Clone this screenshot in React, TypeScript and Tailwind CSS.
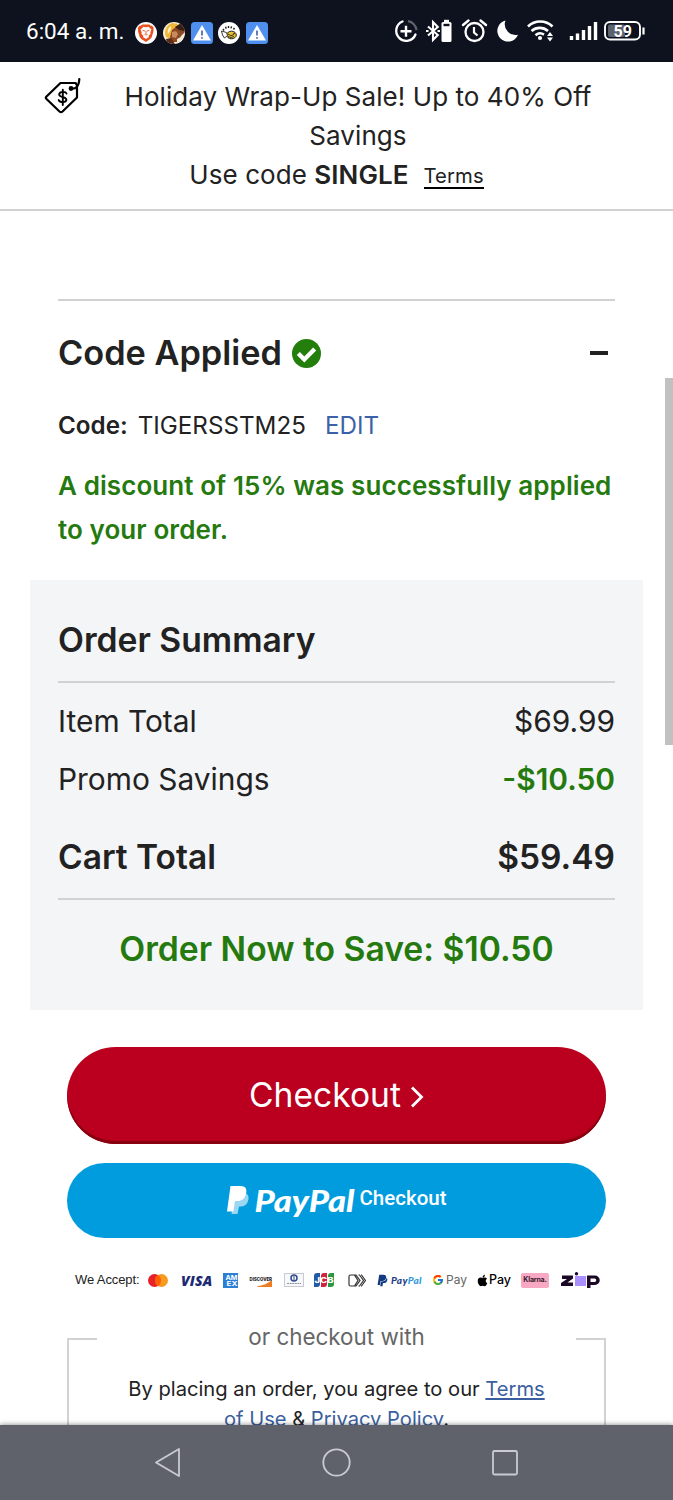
import React from 'react';
import { FcGoogle } from 'react-icons/fc';
import { FaApple, FaPaypal } from 'react-icons/fa';

const summaryRows = [
  { label: 'Item Total', value: '$69.99', saving: false },
  { label: 'Promo Savings', value: '-$10.50', saving: true },
];

function BraveIcon() {
  return (
    <svg width="22" height="22" viewBox="0 0 22 22">
      <circle cx="11" cy="11" r="11" fill="#fff" />
      <path d="M7.5 2.5h7l1.2 1.3 1.5-.1 1.6 2.6-.5 1.4.3 1-1.9 6.5-1.5 1.9L11 20l-4.7-2.9-1.5-1.9L2.9 8.7l.3-1-.5-1.4 1.6-2.6 1.5.1z" fill="#e8501f" />
      <path d="M11 5.3l2.5-.5 2.9 2.7-1.1 2.9.3 1.5-2 1.5.4 1.6L11 17l-3-2 .4-1.600-2-1.500.3-1.500L5.600 7.500l2.900-2.700z" fill="#fff" />
      <path d="M7.6 8.3l2.4.8M14.4 8.3l-2.4.8M11 9v3M9.5 12.3l1.5.8 1.5-.8" stroke="#e8501f" strokeWidth="0.9" fill="none" />
    </svg>
  );
}

function FaceIcon() {
  return (
    <svg width="22" height="22" viewBox="0 0 22 22">
      <defs>
        <clipPath id="face">
          <circle cx="11" cy="11" r="11" />
        </clipPath>
      </defs>
      <g clipPath="url(#face)">
        <rect width="22" height="22" fill="#f8ecd6" />
        <path d="M9 1C2 4 1 10 3 15l5 2 2-7 5-8z" fill="#efb73a" />
        <path d="M8 4C5 6 4 9 5 12l3-5z" fill="#fff3d0" />
        <path d="M9 8l5-4 6 1 2 5-4 4-2 6H9l-2-5z" fill="#8b4a26" />
        <path d="M12 5l6-4 4 3v5l-6-1z" fill="#3a1d12" />
        <path d="M9 10l4-1 2 3-2 4-4-1z" fill="#c98a5c" />
        <path d="M3 17l5-1 4 6H4z" fill="#5c2c17" />
        <path d="M14 17l6-3v6h-6z" fill="#f5e9d8" />
      </g>
    </svg>
  );
}

function AlertIcon() {
  return (
    <svg width="22" height="22" viewBox="0 0 22 22">
      <rect width="22" height="22" rx="3.5" fill="#4f8fee" />
      <path d="M11 3l9 15.5H2z" fill="#fff" />
      <path d="M11 8.5v5" stroke="#3b5f98" strokeWidth="1.6" />
      <circle cx="11" cy="15.9" r="0.9" fill="#3b5f98" />
    </svg>
  );
}

function BeeIcon() {
  return (
    <svg width="22" height="22" viewBox="0 0 22 22">
      <circle cx="11" cy="11" r="11" fill="#fff" />
      <path d="M5 7l1 1.5M7.5 4.8l.8 1.800M10.500 4v2M13.500 4.300l-.5 2M16.500 6l-1 1.500" stroke="#222" strokeWidth="1.4" />
      <ellipse cx="13.5" cy="13" rx="4.8" ry="3.8" fill="#e9c331" stroke="#222" strokeWidth="1" />
      <path d="M10 12q3 3 6 .5M10 14.500q3 2 6 0" fill="none" stroke="#222" strokeWidth="0.9" />
      <path d="M3.5 9l5 1.500 1 3-3 2.500-2-3z" fill="#fff" stroke="#222" strokeWidth="0.9" />
      <circle cx="16" cy="11.5" r="0.8" fill="#222" />
    </svg>
  );
}

function StatusIcons() {
  return (
    <svg width="256" height="30" viewBox="392 16 256 30" fill="none" stroke="#fff">
      {/* data saver */}
      <path d="M402.5 21.5a10 10 0 1 0 13 13" strokeWidth="2.3" strokeLinecap="round" />
      <path d="M408 21.2a10 10 0 0 1 8.5 9" strokeWidth="2.2" stroke="#5d626c" />
      <path d="M406 25.8v11M400.5 31.3h11" strokeWidth="2.4" />
      {/* bluetooth with battery */}
      <path d="M428 26.5l9.8 8.5-4.8 5v-18l4.8 5-9.8 8.5" strokeWidth="2.1" />
      <path d="M426 31h2.5M437.5 31h2.5" strokeWidth="2.2" />
      <rect x="441.5" y="22" width="10" height="20" rx="1.5" fill="#fff" stroke="none" />
      <path d="M444 21h5" strokeWidth="2.4" />
      <path d="M443.5 25h6" stroke="#0d121e" strokeWidth="2.4" />
      {/* alarm */}
      <circle cx="474.5" cy="32" r="9" strokeWidth="2.3" />
      <path d="M474 27v5.5l3.5 3" strokeWidth="2.2" />
      <path d="M463 25l5.5-4.5M486 25l-5.5-4.5" strokeWidth="2.4" strokeLinecap="round" />
      {/* do not disturb moon */}
      <path d="M505.5 20.5a10.7 10.7 0 1 0 12.5 14.3A10.8 10.8 0 0 1 505.5 20.5z" fill="#fff" stroke="none" />
      {/* wifi */}
      <path d="M528 26.5a17.5 17.5 0 0 1 24.5 0" strokeWidth="2.7" />
      <path d="M531.5 31a12.5 12.5 0 0 1 16.5 0" strokeWidth="2.6" />
      <path d="M535.5 35.2a7 7 0 0 1 8.5-.6" strokeWidth="2.5" />
      <circle cx="540" cy="38" r="2.1" fill="#fff" stroke="none" />
      <path d="M547 36l3-4 3 4zM547 37.5h6l-3 4z" fill="#fff" stroke="none" />
      {/* signal */}
      <path d="M571.5 36v4M577.5 33.5v6.5M583.5 30v10M589.5 26v14M595.5 22v18" strokeWidth="3.4" />
      {/* battery */}
      <rect x="605" y="22" width="35" height="17.5" rx="5" strokeWidth="1.9" />
      <rect x="608" y="24.5" width="17" height="12.5" rx="2" fill="#5d626c" stroke="none" />
      <path d="M643.5 27.5v7" strokeWidth="2.2" />
      <text x="613.5" y="36.7" fontSize="16" fontWeight="700" fill="#fff" stroke="none" className="font-[Roboto]">59</text>
    </svg>
  );
}

function TagIcon() {
  return (
    <svg width="40" height="38" viewBox="42 76 40 38" fill="none" stroke="#000" strokeWidth="2.2" strokeLinecap="round" strokeLinejoin="round">
      <path d="M60.5 83h15l1.500 2v12.500L62.500 111.500c-1 .9-2 .9-3 0L46.500 99c-.8-.8-.8-1.700 0-2.500z" />
      <path d="M71 88.5c4.500 1 8-2 8.300-9.500" />
      <circle cx="71" cy="88.5" r="1.3" fill="#000" />
      <path d="M66.5 93.5c-.8-2.200-7-2.400-7.300.9-.3 3.700 7.400 1.700 7.200 5.300-.3 3.300-6.600 3-7.700.4M62.800 89.700v15.300" strokeWidth="1.9" />
    </svg>
  );
}

function PayPalMark() {
  return (
    <svg width="22" height="29" viewBox="0 0 22 29">
      <path d="M7 7h9c5 0 6.500 3.500 5 8-1.200 4-4 5.500-7.500 5.500h-1.500L10.500 28H4.500z" fill="#9bd7f3" />
      <path d="M3.500 0H14c4 0 6 2.800 5.300 6.500C18.300 12.500 15 15 10.500 15H8L6.300 25.500H0z" fill="#fff" />
    </svg>
  );
}

function PaymentMethods() {
  return (
    <div className="flex h-5 items-center pl-[75px]">
      <span className="w-[73px] font-['Liberation_Sans'] text-[13px] tracking-[-0.1px] whitespace-nowrap text-[#222]">We Accept:</span>
      <svg width="20" height="13" viewBox="0 0 20 13">
        <circle cx="6.5" cy="6.5" r="6.5" fill="#e8202a" />
        <circle cx="13.5" cy="6.5" r="6.5" fill="#f79a20" />
        <path d="M10 1a6.5 6.5 0 0 1 0 11 6.5 6.5 0 0 1 0-11z" fill="#ff5f00" />
      </svg>
      <span className="ml-[13px] w-[42px] font-['Open_Sans'] text-[14px] font-extrabold tracking-[0.2px] text-[#1b2a72] italic">VISA</span>
      <svg width="15" height="15" viewBox="0 0 15 15">
        <rect width="15" height="15" fill="#2d7fd6" />
        <text x="2.5" y="7" fontSize="6.5" fontWeight="700" fill="#fff" textLength="12" lengthAdjust="spacingAndGlyphs" className="font-[Inter]">AM</text>
        <text x="3.5" y="13" fontSize="6.5" fontWeight="700" fill="#fff" textLength="11" lengthAdjust="spacingAndGlyphs" className="font-[Inter]">EX</text>
      </svg>
      <svg className="ml-[11px] overflow-visible" width="24" height="14" viewBox="0 0 24 14">
        <path d="M8 13.5Q17 12 23 7v7H8z" fill="#ef7b22" />
        <text x="0.5" y="7.5" fontSize="5.4" fontWeight="800" fill="#222" textLength="22.5" lengthAdjust="spacingAndGlyphs" className="font-[Inter]">DISCOVER</text>
      </svg>
      <svg className="ml-[11px]" width="20" height="14" viewBox="0 0 20 14">
        <rect x="0.5" y="0.5" width="19" height="13" fill="#f7f8fa" stroke="#c7cad0" />
        <circle cx="10" cy="5" r="3" fill="#fff" stroke="#304a90" strokeWidth="1.5" />
        <path d="M10 3v4" stroke="#304a90" />
        <path d="M3 10.5h14" stroke="#8d95a8" strokeDasharray="2 .6" />
      </svg>
      <svg className="ml-[10px]" width="20" height="14" viewBox="0 0 20 14">
        <path d="M3 0h3v11q0 3-3 3H0V3q0-3 3-3z" fill="#1f5ba7" />
        <path d="M10 0h3v11q0 3-3 3H7V3q0-3 3-3z" fill="#cf2440" />
        <path d="M17 0h3v11q0 3-3 3h-3V3q0-3 3-3z" fill="#289843" />
        <text x="0.5" y="9.8" fontSize="7.5" fontWeight="800" fill="#fff" textLength="19" lengthAdjust="spacingAndGlyphs" className="font-[Inter]">JCB</text>
      </svg>
      <svg className="ml-[14px]" width="18" height="13" viewBox="0 0 18 13" fill="none" stroke="#333" strokeWidth="1.2">
        <path d="M6 12H2.5Q1 12 1 10.5v-8Q1 1 2.5 1H6M6.5 1H8l4 5.5L8 12H6.5l3.500-5.500zM10.500 1h1l4 5.500-4 5.500h-1M13 1h.5l4 5.500-4 5.500H13" />
      </svg>
      <FaPaypal className="ml-[10px] text-[13px] text-[#123a80]" />
      <span className="ml-[2px] w-[41px] font-[Lato] text-[10px] font-black tracking-[0.3px] text-[#1f3d8a] italic">
        Pay<span className="text-[#2f9ade]">Pal</span>
      </span>
      <FcGoogle className="text-[12px]" />
      <span className="ml-[2px] w-[30px] font-[Inter] text-[12px] text-[#666]">Pay</span>
      <FaApple className="text-[13px] text-black" />
      <span className="w-[32px] font-[Inter] text-[12.5px] font-medium text-black">Pay</span>
      <span className="flex h-[15px] w-[28px] items-center justify-center rounded-[2px] bg-[#f9a8c4] font-[Inter] text-[7px] font-bold tracking-[-0.2px] text-[#3a2030]">Klarna.</span>
      <svg className="ml-[12px]" width="40" height="16" viewBox="0 0 40 16">
        <path d="M1 3.5h11v3L6.5 10.5H12V14H0v-3l6-4H1z" fill="#1a0826" />
        <rect x="14" y="4" width="11" height="10" fill="#aa8fff" />
        <circle cx="15.5" cy="1.8" r="1.7" fill="#1a0826" />
        <path d="M26 3.5h8a4.7 4.7 0 0 1 0 9.5h-4.5v3H26zM29.5 6.5v3.5h4a1.700 1.700 0 0 0 0-3.500z" fill="#1a0826" fillRule="evenodd" />
      </svg>
    </div>
  );
}

export default function App() {
  return (
    <div className="flex h-[1500px] w-[673px] flex-col overflow-hidden bg-white font-[Inter,sans-serif] text-[#222]">
      {/* Android status bar */}
      <div className="flex h-[62px] shrink-0 items-center justify-between bg-[#0d121e] pr-[25px] pl-[26px]">
        <div className="flex items-center">
          <span className="mt-[2px] w-[109px] font-[Roboto] text-[22.5px] whitespace-nowrap text-white">6:04 a. m.</span>
          <div className="mt-[3px] flex gap-[5.8px]">
            <BraveIcon />
            <FaceIcon />
            <AlertIcon />
            <BeeIcon />
            <AlertIcon />
          </div>
        </div>
        <StatusIcons />
      </div>

      {/* Promo banner */}
      <div className="flex h-[149px] shrink-0 border-b-2 border-[#d2d2d2] pt-[14px] pl-[42px]">
        <TagIcon />
        <div className="mt-px ml-[26px] w-[500px] text-center text-[26px] leading-[39px] tracking-[0.07px]">
          <p>Holiday Wrap-Up Sale! Up to 40% Off Savings</p>
          <p className="-ml-[43px]">
            Use code <span className="font-semibold">SINGLE</span>
            <a className="relative -top-px ml-[15px] inline-block border-b-2 border-black text-[20.3px] leading-[22px]">Terms</a>
          </p>
        </div>
      </div>

      <div className="relative flex h-[1214px] shrink-0 flex-col overflow-hidden">
        {/* Promo code */}
        <section className="mx-[58px] mt-[88px] h-[281px] shrink-0 border-t-2 border-[#d2d2d2]">
          <div className="mt-[28px] flex h-[48px] items-center">
            <h2 className="text-[34.3px] font-semibold">Code Applied</h2>
            <svg className="ml-[10px]" width="29" height="29" viewBox="0 0 29 29">
              <circle cx="14.5" cy="14.5" r="14.5" fill="#247e0c" />
              <path d="M6.3 14.5l6 6L22.7 10" fill="none" stroke="#fff" strokeWidth="4.3" />
            </svg>
            <span className="mr-[7px] ml-auto h-[4px] w-[18px] bg-[#222]" />
          </div>
          <p className="mt-[30px] text-[24.2px] leading-[38px]">
            <span className="font-semibold">Code:</span>
            <span className="ml-[10px]">TIGERSSTM25</span>
            <a className="ml-[19px] text-[#3b62a8]">EDIT</a>
          </p>
          <p className="mt-[19px] text-[26px] leading-[44px] font-semibold tracking-[0.08px] text-[#247a0e]">
            A discount of 15% was successfully applied to your order.
          </p>
        </section>

        {/* Order summary */}
        <section className="mx-[30px] h-[430px] shrink-0 bg-[#f4f5f7] px-[28px] pt-[36px]">
          <h2 className="h-[67px] border-b-2 border-[#d2d2d2] text-[33.7px] leading-[48px] font-semibold">Order Summary</h2>
          <div className="pt-[9px]">
            {summaryRows.map((row) => (
              <div key={row.label} className="flex h-[58px] items-center justify-between text-[29.9px]">
                <span>{row.label}</span>
                <span className={row.saving ? 'font-semibold text-[#247a0e]' : ''}>{row.value}</span>
              </div>
            ))}
          </div>
          <div className="flex h-[92px] justify-between border-b-2 border-[#d2d2d2] pt-[25px] text-[33.5px] leading-[48px] font-semibold">
            <span>Cart Total</span>
            <span>$59.49</span>
          </div>
          <p className="mt-[25px] text-center text-[33.7px] leading-[48px] font-semibold text-[#247a0e]">Order Now to Save: $10.50</p>
        </section>

        {/* Checkout buttons */}
        <div className="mx-[67px] mt-[37px] flex shrink-0 flex-col gap-[19px]">
          <button className="flex h-[97px] items-center justify-center rounded-full bg-[#ba001e] text-[33.6px] text-white shadow-[inset_0_-3px_1px_#86000f]">
            Checkout
            <svg className="mt-[3px] ml-[9px]" width="14" height="22" viewBox="0 0 14 22">
              <path d="M2 1.500l9.500 9.500L2 20.500" fill="none" stroke="#fff" strokeWidth="2.8" />
            </svg>
          </button>
          <button className="flex h-[75px] items-center justify-center rounded-full bg-[#019cde] pl-px text-white">
            <PayPalMark />
            <svg className="ml-[5px] overflow-visible" width="101" height="38" viewBox="0 0 101 38">
              <text x="0.5" y="29.5" fontSize="31" fontWeight="900" fontStyle="italic" fill="#fff" textLength="100" lengthAdjust="spacingAndGlyphs" className="font-[Lato]">PayPal</text>
            </svg>
            <span className="mb-[5px] ml-[4px] font-[Roboto] text-[20.5px] font-medium">Checkout</span>
          </button>
        </div>

        <div className="mt-[32px] shrink-0">
          <PaymentMethods />
        </div>

        {/* Express checkout box, its top border is broken by the caption */}
        <fieldset className="mx-[67px] mt-[34px] h-[120px] shrink-0 border-2 border-[#d2d2d2] text-center">
          <legend className="mx-auto w-[479px] text-[22.4px] leading-[30px] text-[#666]">
            <span className="block pb-[4px] leading-[26px]">or checkout with</span>
          </legend>
          <p className="mx-auto mt-[20px] w-[430px] text-[20.15px] leading-[30px]">
            By placing an order, you agree to our <a className="text-[#3b5f9e] underline">Terms of Use</a> &amp; <a className="text-[#3b5f9e] underline">Privacy Policy</a>.
          </p>
        </fieldset>

        {/* Scroll thumb */}
        <div className="absolute top-[167px] right-0 h-[367px] w-[8px] bg-[#c1c1c1]" />
      </div>

      {/* Android navigation bar */}
      <nav className="relative z-10 h-[75px] shrink-0 bg-[#5f626a] shadow-[0_0_5px_rgba(0,0,0,0.5)]">
        <svg width="673" height="75" viewBox="0 0 673 75" fill="none" stroke="#c9cbd0" strokeWidth="1.8" strokeLinejoin="round">
          <path d="M156 37.5l23-13.500v27z" />
          <circle cx="336.5" cy="37.5" r="13.2" />
          <rect x="493" y="26" width="24" height="23.5" rx="1.5" />
        </svg>
      </nav>
    </div>
  );
}
